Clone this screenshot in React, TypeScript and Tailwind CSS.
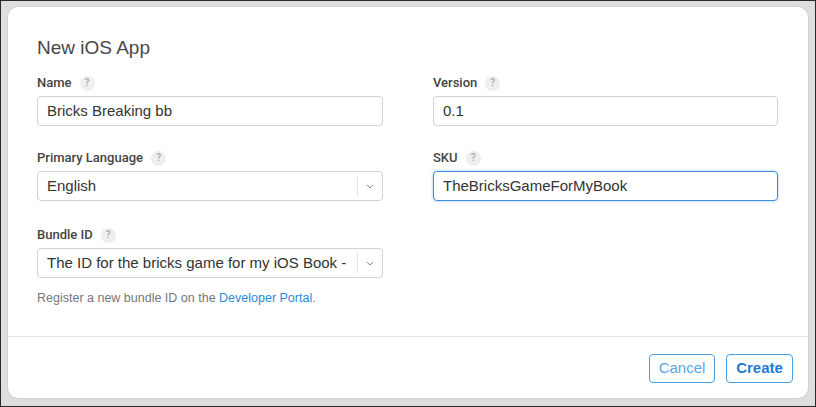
function Help() {
  return (
    <span className="ml-[8px] flex h-[15px] w-[15px] items-center justify-center rounded-full bg-[#efefef] text-[10px] leading-none text-[#a8a8a8]">
      ?
    </span>
  );
}

function Label({ text }: { text: string }) {
  return (
    <div className="flex h-[16px] items-center font-['Roboto'] text-[13px] font-medium text-[#444]">
      {text}
      <Help />
    </div>
  );
}

function TextField({ label, value, focused }: { label: string; value: string; focused?: boolean }) {
  return (
    <div>
      <Label text={label} />
      <div
        className={
          focused
            ? "mt-[5px] flex h-[30px] items-center rounded-[4px] border border-[#3d8fdb] px-[9px] text-[15px] text-[#333] shadow-[0_0_3px_rgba(61,143,219,0.55)]"
            : "mt-[5px] flex h-[30px] items-center rounded-[4px] border border-[#d2d2d2] px-[9px] text-[15px] text-[#333]"
        }
      >
        {value}
      </div>
    </div>
  );
}

function SelectField({ label, value }: { label: string; value: string }) {
  return (
    <div>
      <Label text={label} />
      <div className="mt-[5px] flex h-[30px] items-center rounded-[4px] border border-[#d2d2d2] text-[15px] text-[#333]">
        <div className="flex-1 truncate pl-[9px]">{value}</div>
        <div className="h-[20px] w-px bg-[#e2e2e2]" />
        <div className="flex w-[24px] items-center justify-center">
          <svg width="8" height="5" viewBox="0 0 8 5" fill="none">
            <path d="M0.8 0.8 L4 4 L7.2 0.8" stroke="#8a8a8a" strokeWidth="1" />
          </svg>
        </div>
      </div>
    </div>
  );
}

export default function App() {
  return (
    <div
      className="h-[407px] w-[816px] border border-[#2a2a2a] bg-[#dedede] pl-[7px] pt-[6px]"
      style={{ fontFamily: '"Liberation Sans", Arial, sans-serif' }}
    >
      <div className="flex h-[391px] w-[800px] flex-col rounded-[10px] bg-white shadow-[0_0_2px_rgba(0,0,0,0.18)]">
        <div className="px-[29px] pt-[30px]">
          <h1 className="text-[19px] leading-[22px] text-[#474747]">New iOS App</h1>

          <div className="mt-[16px] grid grid-cols-[346px_345px] gap-x-[50px]">
            <TextField label="Name" value="Bricks Breaking bb" />
            <TextField label="Version" value="0.1" />

            <div className="mt-[24px]">
              <SelectField label="Primary Language" value="English" />
            </div>
            <div className="mt-[24px]">
              <TextField label="SKU" value="TheBricksGameForMyBook" focused />
            </div>

            <div className="mt-[26px]">
              <SelectField label="Bundle ID" value="The ID for the bricks game for my iOS Book -" />
              <p className="mt-[12px] text-[12.5px] leading-[16px] text-[#777]">
                Register a new bundle ID on the <span className="text-[#2b8ad8]">Developer Portal</span>.
              </p>
            </div>
          </div>
        </div>

        <div className="mt-auto border-t border-[#e4e4e4] pb-[15px] pr-[15px] pt-[17px]">
          <div className="flex justify-end gap-[11px]">
            <button className="h-[29px] w-[66px] rounded-[4px] border border-[#4b9fe3] text-[15px] font-light text-[#5aa6e6]">
              Cancel
            </button>
            <button className="h-[29px] w-[67px] rounded-[4px] border border-[#4b9fe3] text-[15px] font-bold text-[#1f7bd2]">
              Create
            </button>
          </div>
        </div>
      </div>
    </div>
  );
}
